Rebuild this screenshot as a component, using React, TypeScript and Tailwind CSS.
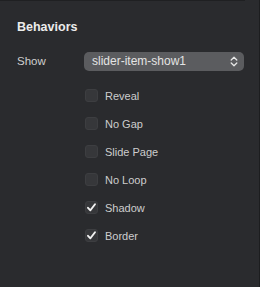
import React, { useState } from "react";

const options = [
  { label: "Reveal", checked: false },
  { label: "No Gap", checked: false },
  { label: "Slide Page", checked: false },
  { label: "No Loop", checked: false },
  { label: "Shadow", checked: true },
  { label: "Border", checked: true },
];

const CheckRow: React.FC<{ label: string; checked: boolean }> = ({ label, checked }) => {
  const [on, setOn] = useState(checked);
  return (
    <button
      type="button"
      onClick={() => setOn(!on)}
      className="flex h-[28px] items-center gap-[7px] text-left"
    >
      <span className="flex h-[13px] w-[13px] items-center justify-center rounded-[3px] border border-[#3d3e41] bg-[#36373a]">
        {on && (
          <svg width="11" height="11" viewBox="0 0 11 11" fill="none">
            <path d="M2 5.8 L4.4 8.3 L9 2.2" stroke="#f2f2f2" strokeWidth="1.9" strokeLinecap="round" strokeLinejoin="round" />
          </svg>
        )}
      </span>
      <span className="text-[11px] text-[#cdcdcd]">{label}</span>
    </button>
  );
};

export default function App() {
  return (
    <div className="h-[287px] w-[260px] bg-[#2a2b2e] font-['Liberation_Sans',sans-serif]">
      <div className="flex h-full w-full border-r border-[#1c1d1f]">
        <div className="flex flex-1 flex-col">
          <div className="h-px w-[245px] bg-[#1f2022]" />
          <div className="px-[17px] pt-[17px] text-[12.5px] font-bold text-[#ececec]">Behaviors</div>
          <div className="mt-[15px] flex items-center px-[17px]">
            <span className="w-[67px] text-[11.5px] text-[#cfcfcf]">Show</span>
            <div className="flex h-[19px] w-[160px] items-center justify-between rounded-[5px] bg-[#5b5c5f] pl-[8px] pr-[6px]">
              <span className="text-[12px] text-[#e4e4e4]">slider-item-show1</span>
              <svg width="8" height="11" viewBox="0 0 8 11" fill="none">
                <path d="M1.2 4 L4 1.3 L6.8 4 M1.2 7 L4 9.7 L6.8 7" stroke="#e8e8e8" strokeWidth="1.3" strokeLinecap="round" strokeLinejoin="round" />
              </svg>
            </div>
          </div>
          <div className="mt-[11px] flex flex-col pl-[85px]">
            {options.map((o) => (
              <CheckRow key={o.label} label={o.label} checked={o.checked} />
            ))}
          </div>
        </div>
      </div>
    </div>
  );
}
